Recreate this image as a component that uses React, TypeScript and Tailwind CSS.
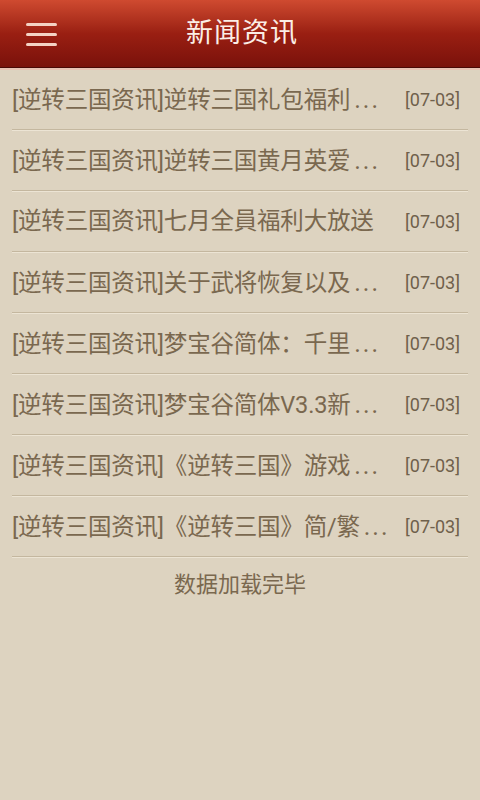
const items = [
  "[逆转三国资讯]逆转三国礼包福利",
  "[逆转三国资讯]逆转三国黄月英爱",
  "[逆转三国资讯]七月全員福利大放送",
  "[逆转三国资讯]关于武将恢复以及",
  "[逆转三国资讯]梦宝谷简体：千里",
  "[逆转三国资讯]梦宝谷简体V3.3新",
  "[逆转三国资讯]《逆转三国》游戏",
  "[逆转三国资讯]《逆转三国》简/繁",
];
// the third title fits whole, the others are shown cut with "..."
const cut = [true, true, false, true, true, true, true, true];

const font = { fontFamily: 'Roboto, "Noto Sans CJK SC", sans-serif' };

export default function App() {
  return (
    <div className="w-[480px] h-[800px] bg-[#ddd3c0] flex flex-col overflow-hidden" style={font}>
      {/* header */}
      <div className="h-[70px] shrink-0 flex flex-col">
        <div className="h-[67px] relative flex items-center justify-center bg-gradient-to-b from-[#cf4a30] via-[#9a1f12] via-50% to-[#7a110b]">
          <button className="absolute left-[26px] top-[23px] flex flex-col gap-[7px]">
            <span className="block w-[31px] h-[3px] bg-[#f4d2c4] rounded-sm" />
            <span className="block w-[31px] h-[3px] bg-[#f4d2c4] rounded-sm" />
            <span className="block w-[31px] h-[3px] bg-[#f4d2c4] rounded-sm" />
          </button>
          <h1 className="text-[27px] text-[#fbeee6] tracking-[1px] leading-none pl-[4px]">新闻资讯</h1>
        </div>
        <div className="h-px bg-[#4a0806]" />
        <div className="h-[2px] bg-[#e9c2b4]" />
      </div>

      {/* list */}
      <div className="px-3">
        {items.map((t, i) => (
          <div key={i}>
            <div className="h-[59px] flex items-center gap-3">
              <span className="flex-1 min-w-0 whitespace-nowrap text-[23.5px] text-[#7a684f] leading-none tracking-[-0.2px]">
                {t}
                {cut[i] && <span className="text-[25px] tracking-[2px] pl-[4px]">...</span>}
              </span>
              <span className="shrink-0 text-[18px] text-[#6f604b] pr-[8px] leading-none">
                [07-03]
              </span>
            </div>
            <div className="h-px bg-[#c4b79f]" />
            <div className="h-px bg-[#ece4d4]" />
          </div>
        ))}
        <div className="h-[52px] flex items-center justify-center text-[22px] text-[#7a684f]">
          数据加载完毕
        </div>
      </div>
    </div>
  );
}
